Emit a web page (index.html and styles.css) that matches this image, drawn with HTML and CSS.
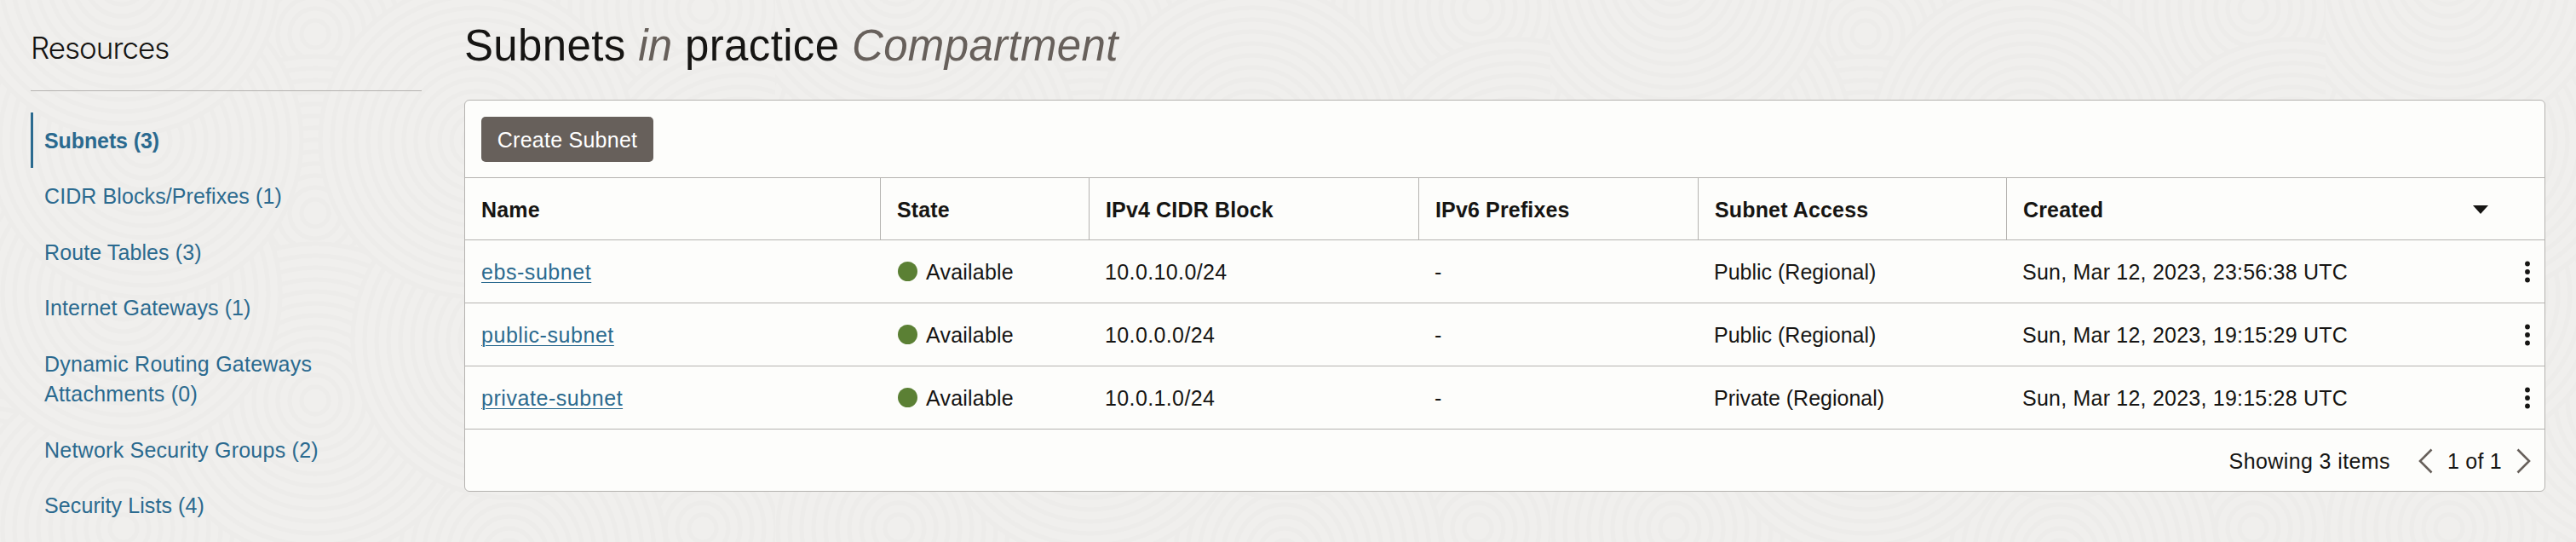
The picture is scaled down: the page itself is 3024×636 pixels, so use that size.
FILE: index.html
```html
<!DOCTYPE html>
<html lang="en">
<head>
<meta charset="utf-8">
<title>Subnets</title>
<link rel="stylesheet" href="styles.css">
</head>
<body>
<svg class="texture" width="3024" height="636" aria-hidden="true">
  <defs>
    <g id="rings" fill="none" stroke="#edecea" stroke-width="5">
      <circle r="184" fill="#f0efed"/><circle r="170"/><circle r="156"/><circle r="142"/><circle r="128"/><circle r="114"/><circle r="100"/><circle r="86"/><circle r="72"/><circle r="58"/><circle r="44"/><circle r="30"/><circle r="16"/>
    </g>
    <pattern id="waves" width="910" height="660" patternUnits="userSpaceOnUse">
      <use href="#rings" x="370" y="40"/>
      <use href="#rings" x="825" y="10"/>
      <use href="#rings" x="370" y="250"/>
      <use href="#rings" x="825" y="330"/>
      <use href="#rings" x="360" y="600"/>
      <use href="#rings" x="825" y="620"/>
      <use href="#rings" x="-20" y="620"/>
      <use href="#rings" x="598" y="650"/>
      <use href="#rings" x="145" y="620"/>
      <use href="#rings" x="370" y="470"/>
      <use href="#rings" x="-40" y="230"/><use href="#rings" x="870" y="230"/>
      <use href="#rings" x="598" y="400"/>
      <use href="#rings" x="145" y="345"/>
      <use href="#rings" x="170" y="165"/>
      <use href="#rings" x="560" y="165"/>
      <use href="#rings" x="143" y="-25"/>
    </pattern>
  </defs>
  <rect width="3024" height="636" fill="url(#waves)"/>
</svg>
<div class="page">
  <aside class="sidebar">
    <h2 class="sidebar-title">Resources</h2>
    <nav class="nav">
      <a class="nav-item active"><span>Subnets (3)</span></a>
      <a class="nav-item"><span>CIDR Blocks/Prefixes (1)</span></a>
      <a class="nav-item"><span>Route Tables (3)</span></a>
      <a class="nav-item"><span>Internet Gateways (1)</span></a>
      <a class="nav-item wide"><span>Dynamic Routing Gateways<br>Attachments (0)</span></a>
      <a class="nav-item wide"><span>Network Security Groups (2)</span></a>
      <a class="nav-item"><span>Security Lists (4)</span></a>
    </nav>
  </aside>
  <main class="main">
    <h1 class="title">Subnets <em>in</em> practice <em>Compartment</em></h1>
    <section class="panel">
      <div class="toolbar"><button class="create">Create Subnet</button></div>
      <div class="row head">
        <div class="cell">Name</div><div class="cell">State</div><div class="cell">IPv4 CIDR Block</div><div class="cell">IPv6 Prefixes</div><div class="cell">Subnet Access</div>
        <div class="cell sorted">Created<svg class="sort" width="18" height="10" viewBox="0 0 18 10"><path d="M0 0h18L9 10z"/></svg></div>
      </div>
      <div class="row">
        <div class="cell"><a class="link">ebs-subnet</a></div><div class="cell state"><i class="dot"></i>Available</div><div class="cell cidr">10.0.10.0/24</div><div class="cell">-</div><div class="cell access">Public (Regional)</div>
        <div class="cell last">Sun, Mar 12, 2023, 23:56:38 UTC<svg class="kebab" width="8" height="26" viewBox="0 0 8 26"><circle cx="4" cy="3.5" r="2.9"/><circle cx="4" cy="13" r="2.9"/><circle cx="4" cy="22.5" r="2.9"/></svg></div>
      </div>
      <div class="row">
        <div class="cell"><a class="link">public-subnet</a></div><div class="cell state"><i class="dot"></i>Available</div><div class="cell cidr">10.0.0.0/24</div><div class="cell">-</div><div class="cell access">Public (Regional)</div>
        <div class="cell last">Sun, Mar 12, 2023, 19:15:29 UTC<svg class="kebab" width="8" height="26" viewBox="0 0 8 26"><circle cx="4" cy="3.5" r="2.9"/><circle cx="4" cy="13" r="2.9"/><circle cx="4" cy="22.5" r="2.9"/></svg></div>
      </div>
      <div class="row">
        <div class="cell"><a class="link">private-subnet</a></div><div class="cell state"><i class="dot"></i>Available</div><div class="cell cidr">10.0.1.0/24</div><div class="cell">-</div><div class="cell access">Private (Regional)</div>
        <div class="cell last">Sun, Mar 12, 2023, 19:15:28 UTC<svg class="kebab" width="8" height="26" viewBox="0 0 8 26"><circle cx="4" cy="3.5" r="2.9"/><circle cx="4" cy="13" r="2.9"/><circle cx="4" cy="22.5" r="2.9"/></svg></div>
      </div>
      <div class="footer">
        <span class="count">Showing 3 items</span>
        <svg class="chev" width="17" height="30" viewBox="0 0 17 30"><path d="M15.5 1.5L2 15l13.500 13.500"/></svg>
        <span class="pages">1 of 1</span>
        <svg class="chev" width="17" height="30" viewBox="0 0 17 30"><path d="M1.500 1.500L15 15L1.500 28.500"/></svg>
      </div>
    </section>
  </main>
</div>
</body>
</html>
```
FILE: styles.css
```css
* { box-sizing: border-box; }
body {
  margin: 0;
  height: 636px;
  overflow: hidden;
  background: #f0efed;
  color: #161513;
  font: 25px/36px "Liberation Sans", Arial, sans-serif;
  letter-spacing: 0.22px;
}
.texture { position: absolute; top: 0; left: 0; z-index: -1; }
.page { display: flex; height: 636px; }
.sidebar { width: 545px; padding: 0 50px 0 36px; }
.sidebar-title {
  margin: 0 0 25px;
  height: 107px;
  padding-top: 31px;
  border-bottom: 1px solid #b5b3b0;
  font: 300 35px/50px Inter, "Liberation Sans", sans-serif;
  letter-spacing: -1px;
}
.nav { letter-spacing: 0.1px; line-height: 35.7px; }
.nav-item {
  display: block;
  padding: 15.7px 0 14.1px 13px;
  border-left: 3px solid transparent;
  color: #2b6a8f;
}
.nav-item.active { border-left-color: #2b6a8f; font-weight: bold; letter-spacing: -0.1px; }
.nav-item.wide { letter-spacing: 0.24px; }
.main { width: 2443px; }
.title { margin: 0; height: 117px; padding-top: 24px; font-weight: normal; font-size: 51px; line-height: 60px; letter-spacing: 0.35px; white-space: nowrap; }
.title em { color: #67605b; }
.panel {
  height: 460px;
  border: 1px solid #b5b3b0;
  border-radius: 6px;
  background: #fdfdfb;
}
.toolbar { height: 90px; padding: 19px; }
.create {
  display: block;
  width: 202px;
  height: 53px;
  padding: 0;
  border: 0;
  border-radius: 5px;
  background: #67605b;
  color: #fff;
  font: inherit;
  letter-spacing: 0.25px;
}
.row {
  display: grid;
  grid-template-columns: 487px 245px 387px 328px 362px 1fr;
  height: 74px;
  border-top: 1px solid #b5b3b0;
}
.cell { display: flex; align-items: center; padding-left: 19px; white-space: nowrap; }
.head { height: 73px; font-weight: bold; letter-spacing: 0.15px; }
.head .cell { padding-top: 2px; }
.head .cell + .cell { border-left: 1px solid #b5b3b0; }
.sorted { justify-content: space-between; padding-right: 66px; }
.sort { fill: #161513; }
.row:not(.head) .cell + .cell { padding-left: 19px; }
.row:not(.head) .cell + .state { padding-left: 21px; }
.cidr { letter-spacing: 0.38px; }
.access { letter-spacing: 0; }
.link { color: #2b6a8f; letter-spacing: 0.55px; text-decoration: underline; text-decoration-thickness: 1px; text-underline-offset: 3px; }
.dot { width: 23px; height: 23px; margin-right: 10px; border-radius: 50%; background: #5b8034; }
.last { justify-content: space-between; padding-right: 16px; }
.kebab { fill: #161513; }
.footer {
  display: flex;
  align-items: center;
  justify-content: flex-end;
  height: 74px;
  padding-right: 16px;
  border-top: 1px solid #b5b3b0;
}
.chev { fill: none; stroke: #67605b; stroke-width: 2.6; }
.count { margin-right: 33px; letter-spacing: 0.4px; }
.pages { width: 64px; margin: 0 17px; }
```
